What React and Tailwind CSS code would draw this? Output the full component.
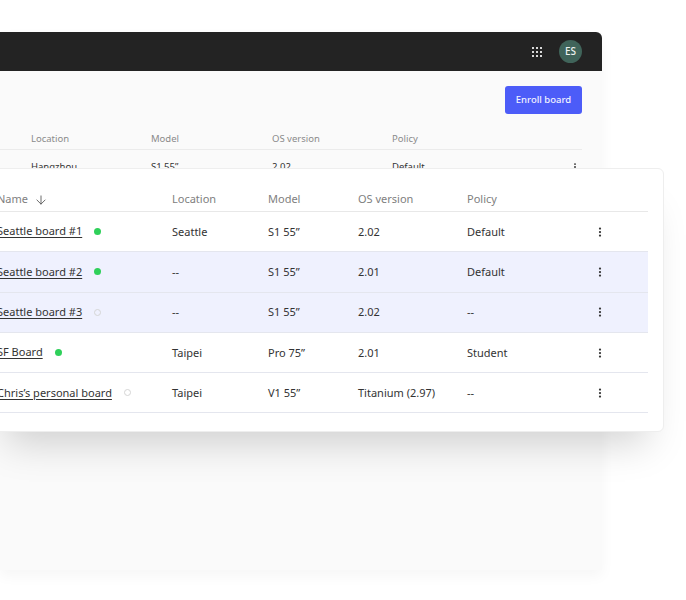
import { MoreVertical, ArrowDown } from 'lucide-react'

const font = { fontFamily: '"Noto Sans", sans-serif' }

const boards = [
    { name: 'Seattle board #1', online: true, location: 'Seattle', model: 'S1 55”', os: '2.02', policy: 'Default' },
    { name: 'Seattle board #2', online: true, location: '--', model: 'S1 55”', os: '2.01', policy: 'Default', selected: true },
    { name: 'Seattle board #3', online: false, location: '--', model: 'S1 55”', os: '2.02', policy: '--', selected: true },
    { name: 'SF Board', online: true, location: 'Taipei', model: 'Pro 75”', os: '2.01', policy: 'Student' },
    { name: 'Chris’s personal board', online: false, location: 'Taipei', model: 'V1 55”', os: 'Titanium (2.97)', policy: '--' },
]

function GridIcon() {
    const dots = []
    for (let y = 0; y < 3; y++) {
        for (let x = 0; x < 3; x++) {
            dots.push(<rect key={`${x}-${y}`} x={x * 4} y={y * 4} width="2" height="2" fill="#d8d8d8" />)
        }
    }
    return <svg width="10" height="10" viewBox="0 0 10 10">{dots}</svg>
}

function BackPanel() {
    return (
        <div className="w-[602px] h-[538px] rounded-tr-md bg-[#fafafa] shadow-[0_6px_14px_rgba(0,0,0,0.04)]">
            <div className="h-[39px] bg-[#232323] rounded-tr-md flex items-center justify-end gap-[17px] pr-[20px]">
                <GridIcon />
                <div className="w-[23px] h-[23px] rounded-full bg-[#40645a] text-[#eef2f0] text-[10px] font-medium flex items-center justify-center">ES</div>
            </div>
            <div className="flex justify-end pr-[20px] pt-[15px]">
                <button className="w-[77px] h-[28px] rounded-[3px] bg-[#4c5cf8] text-[#f2f3ff] text-[9.5px] font-medium">Enroll board</button>
            </div>
            <div className="mt-[16px] mr-[20px] grid grid-cols-[31px_120px_121px_120px_1fr] h-[20px] items-center border-b border-[#ebebeb] text-[9.5px] text-[#8a8a8a]">
                <span></span>
                <span>Location</span>
                <span>Model</span>
                <span>OS version</span>
                <span>Policy</span>
            </div>
            <div className="mr-[20px] mt-[10px] grid grid-cols-[31px_120px_121px_120px_1fr_12px] items-center text-[9.5px] text-[#333333]">
                <span></span>
                <span>Hangzhou</span>
                <span>S1 55”</span>
                <span>2.02</span>
                <span>Default</span>
                <MoreVertical size={10} strokeWidth={2.5} className="text-[#333333]" />
            </div>
        </div>
    )
}

function FrontCard() {
    return (
        <div className="absolute left-[-10px] top-[168px] w-[674px] h-[264px] bg-white border border-[#eeeeee] rounded-md shadow-[0_28px_36px_-16px_rgba(0,0,0,0.17)] pt-[19px]">
            <div className="ml-[9px] mr-[15px] text-[11px]">
                <div className="grid grid-cols-[172px_96px_90px_109px_1fr] h-[24px] items-center border-b border-[#e8e8e8] text-[#808080]">
                    <span className="flex items-center gap-[6px] -ml-[3px]">Name <ArrowDown size={14} strokeWidth={1.5} className="text-[#555555]" /></span>
                    <span>Location</span>
                    <span>Model</span>
                    <span>OS version</span>
                    <span>Policy</span>
                </div>
                {boards.map((b) => (
                    <div key={b.name} className={`grid grid-cols-[172px_96px_90px_109px_1fr_54px] h-[40.3px] items-center border-b border-[#e4e6ee] text-[#333333] ${b.selected ? 'bg-[#eff1fe]' : 'bg-white'}`}>
                        <span className="flex items-center gap-[12px] -ml-[3px]">
                            <a className="underline underline-offset-2 whitespace-nowrap">{b.name}</a>
                            {b.online
                                ? <span className="w-[7px] h-[7px] rounded-full bg-[#2fd05a]"></span>
                                : <span className="w-[7px] h-[7px] rounded-full border border-[#d5d5d5]"></span>}
                        </span>
                        <span className="pt-[1px]">{b.location}</span>
                        <span className="pt-[1px]">{b.model}</span>
                        <span className="pt-[1px]">{b.os}</span>
                        <span className="pt-[1px]">{b.policy}</span>
                        <MoreVertical size={12} strokeWidth={2.5} className="text-[#333333]" />
                    </div>
                ))}
            </div>
        </div>
    )
}

export default function App() {
    return (
        <div className="relative w-[686px] h-[600px] overflow-hidden bg-white pt-[32px]" style={font}>
            <BackPanel />
            <FrontCard />
        </div>
    )
}
